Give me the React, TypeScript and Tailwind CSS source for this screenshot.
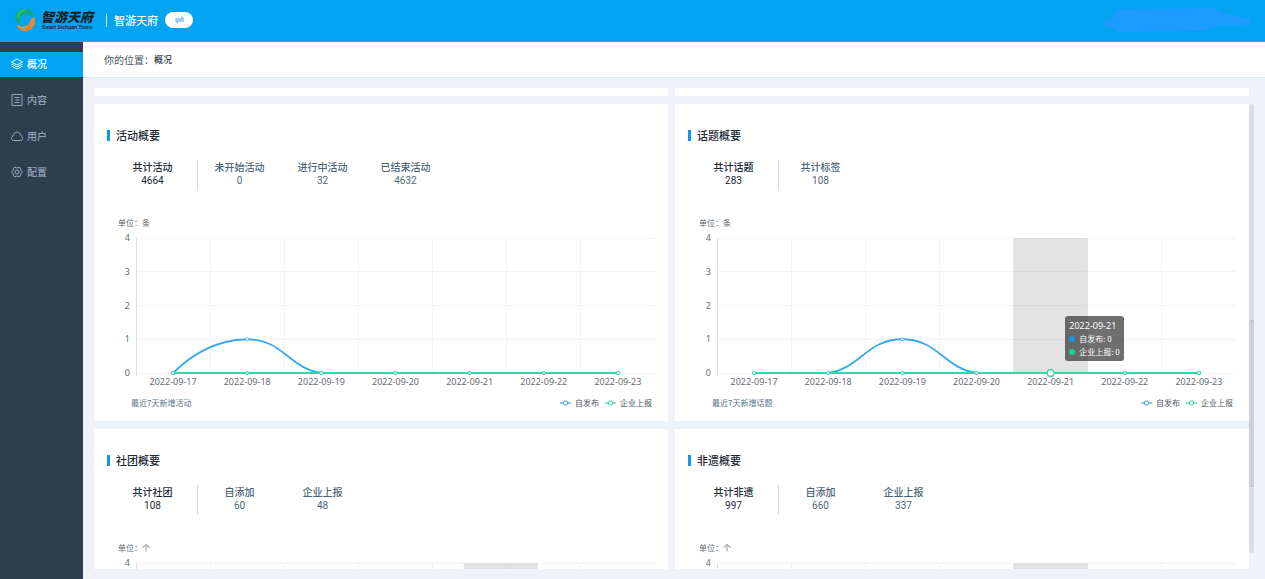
import React from 'react';

interface Stat {
  label: string;
  value: number;
}

interface Summary {
  title: string;
  unit: string;
  caption: string;
  stats: Stat[];
  published: number[];
  reported: number[];
  shadow?: number;
  tooltip?: number;
}

const DATES = ['2022-09-17', '2022-09-18', '2022-09-19', '2022-09-20', '2022-09-21', '2022-09-22', '2022-09-23'];

const SUMMARIES: Summary[] = [
  {
    title: '活动概要',
    unit: '条',
    caption: '最近7天新增活动',
    stats: [
      { label: '共计活动', value: 4664 },
      { label: '未开始活动', value: 0 },
      { label: '进行中活动', value: 32 },
      { label: '已结束活动', value: 4632 },
    ],
    published: [0, 1, 0, 0, 0, 0, 0],
    reported: [0, 0, 0, 0, 0, 0, 0],
  },
  {
    title: '话题概要',
    unit: '条',
    caption: '最近7天新增话题',
    stats: [
      { label: '共计话题', value: 283 },
      { label: '共计标签', value: 108 },
    ],
    published: [0, 0, 1, 0, 0, 0, 0],
    reported: [0, 0, 0, 0, 0, 0, 0],
    shadow: 4,
    tooltip: 4,
  },
  {
    title: '社团概要',
    unit: '个',
    caption: '最近7天新增社团',
    stats: [
      { label: '共计社团', value: 108 },
      { label: '自添加', value: 60 },
      { label: '企业上报', value: 48 },
    ],
    published: [0, 0, 0, 0, 0, 0, 0],
    reported: [0, 0, 0, 0, 0, 0, 0],
    shadow: 4.42,
  },
  {
    title: '非遗概要',
    unit: '个',
    caption: '最近7天新增非遗',
    stats: [
      { label: '共计非遗', value: 997 },
      { label: '自添加', value: 660 },
      { label: '企业上报', value: 337 },
    ],
    published: [0, 0, 0, 0, 0, 0, 0],
    reported: [0, 0, 0, 0, 0, 0, 0],
    shadow: 4,
  },
];

const LEFT = 42;
const RIGHT = 561;
const TOP = 8;
const BOTTOM = 143;
const STEP = (RIGHT - LEFT) / 7;
const BLUE = '#38a9ec';
const GREEN = '#2fd8a4';

const pointX = (i: number) => LEFT + STEP * (i + 0.5);
const pointY = (v: number) => BOTTOM - ((BOTTOM - TOP) / 4) * v;

// Flat tangents at peaks and inner points, a straight start at the first one
const smoothPath = (values: number[]) =>
  values.reduce((path, v, i) => {
    if (i === 0) return `M${pointX(0)} ${pointY(v)}`;
    const x0 = pointX(i - 1);
    const x1 = pointX(i);
    const y0 = pointY(values[i - 1]);
    const y1 = pointY(v);
    if (y0 === y1) return `${path} L${x1} ${y1}`;
    if (i === 1) return `${path} C${x0 + 14} ${y0 - 14} ${x1 - 34} ${y1} ${x1} ${y1}`;
    const rising = y1 < y0;
    const c0 = rising ? 33 : 36;
    const c1 = rising ? 36 : 33;
    const d0 = rising ? -5 : 0;
    const d1 = rising ? 0 : -5;
    return `${path} C${x0 + c0} ${y0 + d0} ${x1 - c1} ${y1 + d1} ${x1} ${y1}`;
  }, '');

const LineChart = ({ data }: { data: Summary }) => (
  <div className="relative">
    <svg viewBox="0 0 574 160" className="block w-full" role="img" aria-label={data.title}>
      <g stroke="#f4f4f6" shapeRendering="crispEdges">
        {[0, 1, 2, 3, 4].map((v) => (
          <line key={v} x1={LEFT} x2={RIGHT} y1={pointY(v)} y2={pointY(v)} />
        ))}
        {[1, 2, 3, 4, 5, 6].map((i) => (
          <line key={i} x1={LEFT + STEP * i} x2={LEFT + STEP * i} y1={TOP} y2={BOTTOM + 2} />
        ))}
      </g>
      {data.shadow !== undefined && (
        <rect x={LEFT + STEP * data.shadow} y={TOP} width={STEP} height={BOTTOM - TOP} fill="#969696" opacity="0.27" />
      )}
      <line x1={LEFT} x2={LEFT} y1={TOP} y2={BOTTOM + 3} stroke="#dcdee2" shapeRendering="crispEdges" />
      <g fill="#666b73" className="font-['Noto_Sans',sans-serif] text-[9px]">
        {[0, 1, 2, 3, 4].map((v) => (
          <text key={v} x={LEFT - 6} y={pointY(v) + 3} textAnchor="end">{v}</text>
        ))}
        {DATES.map((d, i) => (
          <text key={d} x={pointX(i)} y={BOTTOM + 12} textAnchor="middle">{d}</text>
        ))}
      </g>
      <path d={smoothPath(data.published)} fill="none" stroke={BLUE} strokeWidth="1.8" />
      {data.published.map((v, i) => (
        <circle key={i} cx={pointX(i)} cy={pointY(v)} r="1.6" fill="#fff" stroke={BLUE} strokeWidth="0.8" />
      ))}
      <path d={smoothPath(data.reported)} fill="none" stroke={GREEN} strokeWidth="2" />
      {data.reported.map((v, i) => (
        <circle
          key={i}
          cx={pointX(i)}
          cy={pointY(v)}
          r={i === data.tooltip ? 3.5 : 1.7}
          fill="#fff"
          stroke={GREEN}
          strokeWidth={i === data.tooltip ? 1.4 : 1}
        />
      ))}
    </svg>
    {data.tooltip !== undefined && (
      <div className="absolute left-[68%] top-[86px] rounded-[3px] bg-[#323232]/70 px-1 py-[3px] text-[8px] leading-[13px] whitespace-nowrap text-white">
        <div className="font-['Noto_Sans',sans-serif] text-[9px]">{DATES[data.tooltip]}</div>
        <div className="flex items-center gap-1">
          <span className="size-1.5 rounded-full bg-[#0d9ae6]" />
          自发布: {data.published[data.tooltip]}
        </div>
        <div className="flex items-center gap-1">
          <span className="size-1.5 rounded-full bg-[#14d292]" />
          企业上报: {data.reported[data.tooltip]}
        </div>
      </div>
    )}
  </div>
);

const LegendItem = ({ color, label }: { color: string; label: string }) => (
  <span className="flex items-center gap-1">
    <svg width="11" height="6" viewBox="0 0 11 6" aria-hidden="true">
      <path d="M0 3h11" stroke={color} strokeWidth="1.2" />
      <circle cx="5.5" cy="3" r="2.2" fill="#fff" stroke={color} />
    </svg>
    {label}
  </span>
);

const SummaryCard = ({ data }: { data: Summary }) => (
  <section className="bg-white pt-[25px] pb-[10px]">
    <h2 className="flex items-center gap-[6px] pl-[13px] text-[11px] leading-[13px] font-medium text-[#1d2a36]">
      <span className="h-[11px] w-[3px] bg-[#1296f0]" />
      {data.title}
    </h2>
    <dl className="mt-[18px] flex pl-[14px] text-center text-[10px] leading-[14px]">
      {data.stats.map((s, i) => (
        <div
          key={s.label}
          className={i === 0
            ? 'w-[90px] border-r border-[#d5d8dc] pb-px text-[#1d2a36]'
            : 'w-[83px] text-[#4c6677]'}
        >
          <dt className="font-medium">{s.label}</dt>
          <dd className="font-[Roboto,sans-serif]">{s.value}</dd>
        </div>
      ))}
    </dl>
    <p className="mt-[26px] pl-[24px] text-[8px] leading-[15px] text-[#5c6470]">单位：{data.unit}</p>
    <LineChart data={data} />
    <div className="mt-[5px] flex items-center justify-between pr-4 pl-[37px] text-[8px] leading-[16px]">
      <span className="text-[#56758c]">{data.caption}</span>
      <div className="flex gap-[6px] text-[#4d5560]">
        <LegendItem color={BLUE} label="自发布" />
        <LegendItem color={GREEN} label="企业上报" />
      </div>
    </div>
  </section>
);

const iconProps = {
  width: 12,
  height: 12,
  viewBox: '0 0 24 24',
  fill: 'none',
  stroke: 'currentColor',
  strokeWidth: 1.8,
  strokeLinejoin: 'round' as const,
  'aria-hidden': true,
};

const NAV = [
  {
    label: '概况',
    icon: (
      <svg {...iconProps}>
        <path d="M12 2 23 8 12 14 1 8Z M1 12l11 6 11-6 M1 16l11 6 11-6" />
      </svg>
    ),
  },
  {
    label: '内容',
    icon: (
      <svg {...iconProps}>
        <rect x="2" y="1" width="20" height="22" rx="1" />
        <path d="M7 7h10M9 12h8M7 17h10" />
      </svg>
    ),
  },
  {
    label: '用户',
    icon: (
      <svg {...iconProps}>
        <path d="M5 21a4 4 0 0 1-3.500-6C4 13 5 4 12 4s8 9 10.500 11A4 4 0 0 1 19 21Z" />
      </svg>
    ),
  },
  {
    label: '配置',
    icon: (
      <svg {...iconProps}>
        <path d="M8 2.500 12 4l4-1.500 3 2 .5 4L23 12l-3.500 3.500-.5 4-3 2-4-1.500-4 1.500-3-2-.5-4L1 12l3.500-3.500.5-4Z" />
        <circle cx="12" cy="12" r="4" />
      </svg>
    ),
  },
];

const Logo = () => (
  <div className="flex items-center gap-[5px]">
    <svg width="22" height="24" viewBox="0 0 22 24" aria-hidden="true">
      <path d="M2 14C-1 7 4 1 11 1c6 0 10 4 9.500 10C18 7 14 5 10 7c-4 2-3 5-4 7-1 2-3 2-4 0Z" fill="#15a884" />
      <path d="M3 6C5 2 9 0 13 2 9 3 6 5 5 9 4 10 2 9 3 6Z" fill="#27c06a" />
      <path d="M20.500 10C23 17 18 23 11 23c-5 0-8-3-8.500-7 2 2 5 4 9 2 4-1 4-4 5-6 1-2 3-4 4-2Z" fill="#e08a35" />
      <path d="M2.500 16c3 3 7 4 11 2-2 3-8 4-11-2Z" fill="#c6a34c" />
    </svg>
    <div className="flex flex-col items-center text-[#12222c]">
      <span className="text-[13px] leading-[14px] font-black italic">智游天府</span>
      <span className="font-['Liberation_Sans',sans-serif] text-[5px] leading-[6px] font-bold whitespace-nowrap">Smart Sichuan Tours</span>
    </div>
  </div>
);

const App = () => {
  return (
    <div className="flex h-screen flex-col overflow-hidden bg-[#eef2f9] font-['Noto_Sans_CJK_SC',sans-serif]">
      <header className="flex h-[42px] shrink-0 items-center justify-between bg-[#02a4f1] pr-3 pb-[2px] pl-[14px]">
        <div className="flex items-center">
          <Logo />
          <span className="ml-[13px] h-[13px] w-px bg-white/80" />
          <span className="ml-[7px] text-[11px] leading-4 font-medium text-white">智游天府</span>
          <button aria-label="切换" className="ml-[7px] flex h-4 w-7 items-center justify-center rounded-full bg-white text-[#3aa5e8]">
            <svg width="9" height="8" viewBox="0 0 9 8" fill="none" stroke="currentColor" aria-hidden="true">
              <path d="M0 3h8.500L6 .8M9 5H.5L3 7.200" />
            </svg>
          </button>
        </div>
        <svg width="150" height="24" viewBox="0 0 150 24" aria-hidden="true">
          <path d="M14 1 110 0l16 7 20 3 3 4-6 3-28 1-16 5-84 1-6-4-9-2 1-4 8-3Z" fill="#1e9bff" />
        </svg>
      </header>

      <div className="flex min-h-0 flex-1">
        <nav className="w-[83px] shrink-0 bg-[#2f3e4f] pt-[10px]">
          <ul className="flex flex-col gap-[11px] text-[10px]">
            {NAV.map((item, i) => (
              <li key={item.label}>
                <a
                  href="#"
                  className={i === 0
                    ? 'flex h-[25px] items-center gap-1 bg-[#02a4f1] pb-[2px] pl-[11px] font-medium text-white'
                    : 'flex h-[25px] items-center gap-1 pb-[2px] pl-[11px] text-[#a3b7cb]'}
                >
                  {item.icon}
                  {item.label}
                </a>
              </li>
            ))}
          </ul>
        </nav>

        <main className="flex min-w-0 flex-1 flex-col">
          <div className="flex h-9 shrink-0 items-center border-b border-[#e2e6ea] bg-white pl-[21px] text-[10px] text-[#4b5560]">
            你的位置：
            <span className="text-[9px] font-medium text-[#2d3742]">概况</span>
          </div>

          <div className="flex min-h-0 flex-1 px-[11px] py-[10px]">
            <div className="grid min-w-0 flex-1 grid-cols-2 content-start gap-x-[7px] gap-y-2 overflow-y-auto [scrollbar-width:none]">
              <div className="h-2 bg-white" />
              <div className="h-2 bg-white" />
              {SUMMARIES.map((s) => (
                <SummaryCard key={s.title} data={s} />
              ))}
            </div>
            <div className="my-4 w-[5px] shrink-0 rounded-sm bg-[#dcdee4] pt-[216px]">
              <div className="h-[167px] rounded-sm border-y border-[#b9bcc2] bg-[#cdd0d5]" />
            </div>
          </div>
        </main>
      </div>
    </div>
  );
};

export default App;
